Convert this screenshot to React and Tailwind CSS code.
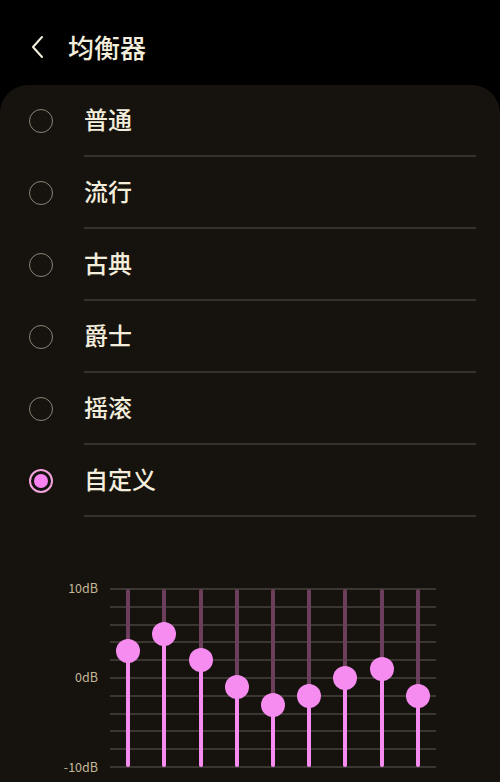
const presets = ["普通", "流行", "古典", "爵士", "摇滚", "自定义"];
const bands = [3, 5, 2, -1, -3, -2, 0, 1, -2];

const H = 178;

function Radio({ checked }) {
  if (checked) {
    return (
      <span className="flex h-6 w-6 items-center justify-center rounded-full border-2 border-[#f2a3dc]">
        <span className="h-[14px] w-[14px] rounded-full bg-[#f782f0]" />
      </span>
    );
  }
  return <span className="block h-6 w-6 rounded-full border-[1.5px] border-[#8c8576]" />;
}

function Chart() {
  return (
    <div className="flex">
      <div className="relative h-[180px] w-[110px] text-[12.5px] text-[#c4b799]">
        <span className="absolute right-[12px] top-[-9px]">10dB</span>
        <span className="absolute right-[12px] top-[80px]">0dB</span>
        <span className="absolute right-[12px] top-[170px]">-10dB</span>
      </div>
      <div className="relative h-[180px] w-[326px]">
        <div className="flex h-full flex-col justify-between">
          {Array.from({ length: 11 }).map((_, i) => (
            <div key={i} className="h-[2px] bg-[#3b3631]" />
          ))}
        </div>
        <div className="absolute inset-0 grid grid-cols-9">
          {bands.map((v, i) => {
            const y = ((10 - v) / 20) * H + 1;
            return (
              <div key={i} className="relative">
                <div className="absolute left-1/2 top-[1px] bottom-[1px] w-[4px] -translate-x-1/2 rounded-full bg-[#6b3f5b]" />
                <div
                  className="absolute left-1/2 bottom-[1px] w-[4px] -translate-x-1/2 rounded-full bg-[#f78cf0]"
                  style={{ top: y }}
                />
                <div
                  className="absolute left-1/2 h-6 w-6 -translate-x-1/2 -translate-y-1/2 rounded-full bg-[#f78cf0]"
                  style={{ top: y }}
                />
              </div>
            );
          })}
        </div>
      </div>
    </div>
  );
}

export default function App() {
  return (
    <div
      className="h-[782px] w-[500px] overflow-hidden bg-black text-[#f3eddc]"
      style={{ fontFamily: '"Noto Sans CJK SC", "Noto Sans", sans-serif' }}
    >
      <header className="flex h-[85px] items-center pl-[28px]">
        <svg width="20" height="26" viewBox="0 0 20 26" className="mt-[8px]">
          <path d="M14 3 L5 13 L14 23" fill="none" stroke="#f3eddc" strokeWidth="2" strokeLinecap="round" strokeLinejoin="round" />
        </svg>
        <h1 className="ml-[20px] mt-[8px] text-[26px] font-medium">均衡器</h1>
      </header>
      <section className="h-full rounded-t-[28px] bg-[#16130f]">
        <ul>
          {presets.map((p, i) => (
            <li key={p} className="flex h-[72px] items-stretch">
              <div className="flex w-[84px] items-center pl-[29px]">
                <Radio checked={i === presets.length - 1} />
              </div>
              <div className="mr-[24px] flex flex-1 items-center border-b-2 border-[#37322c] pb-[2px] text-[24px] font-medium">
                {p}
              </div>
            </li>
          ))}
        </ul>
        <div className="pt-[71px]">
          <Chart />
        </div>
      </section>
    </div>
  );
}
